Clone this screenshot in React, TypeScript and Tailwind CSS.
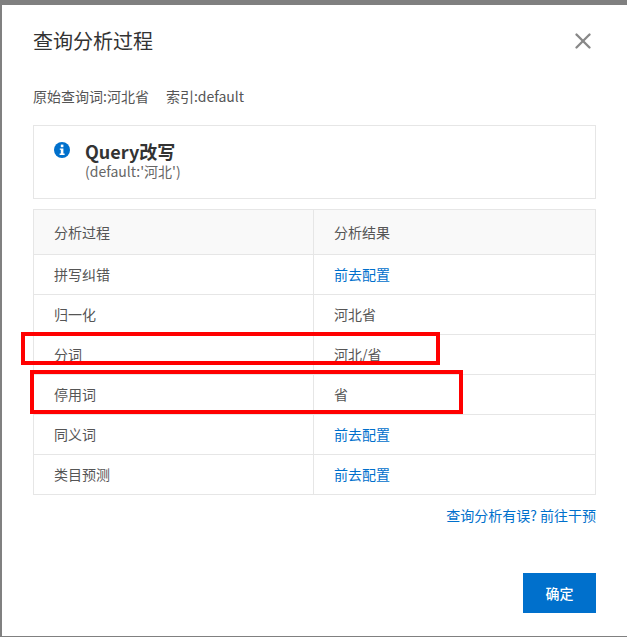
import { X } from 'lucide-react'

const rows = [
  { step: '拼写纠错', result: '前去配置', link: true },
  { step: '归一化', result: '河北省' },
  { step: '分词', result: '河北/省' },
  { step: '停用词', result: '省' },
  { step: '同义词', result: '前去配置', link: true },
  { step: '类目预测', result: '前去配置', link: true },
]

const font = 'font-["Noto_Sans_CJK_SC","Liberation_Sans",sans-serif]'

function InfoIcon() {
  return (
    <svg width="16" height="18" viewBox="0 0 16 18" className="mt-[1px] shrink-0">
      <circle cx="8" cy="9" r="8" fill="#0070cc" />
      <rect x="6.8" y="3.6" width="2.6" height="2.6" fill="#fff" />
      <path d="M5.8 7.4h3.6v5.2h1.2v1.4H5.6v-1.4h1.2V8.8h-1z" fill="#fff" />
    </svg>
  )
}

export default function App() {
  return (
    <div className={`h-[637px] w-[627px] overflow-hidden bg-[#808080] pt-[5px] pb-[1px] pl-[2px] ${font}`}>
      <div className="relative h-full bg-white px-[31px] text-[14px] text-[#333]">
        <div className="flex h-[74px] items-center justify-between pb-[2px]">
          <h2 className="text-[20px] font-normal text-[#333]">查询分析过程</h2>
          <X size={26} strokeWidth={2.2} className="text-[#888]" />
        </div>
        <div className="flex h-[34px] items-center gap-[17px] text-[#555]">
          <span>原始查询词:河北省</span>
          <span>索引:default</span>
        </div>
        <div className="mt-[12px] flex h-[74px] gap-[15px] border border-[#e6e6e6] px-[20px] pt-[14px]">
          <InfoIcon />
          <div>
            <div className="text-[18px] leading-[22px] font-bold text-[#333]">Query改写</div>
            <div className="text-[14px] leading-[18px] text-[#666]">(default:'河北')</div>
          </div>
        </div>
        <table className="mt-[10px] w-full table-fixed border-collapse">
          <thead>
            <tr className="h-[45px] bg-[#f9f9f9] text-left">
              <th className="w-[280px] border border-[#e6e6e6] pl-[20px] font-normal text-[#555]">分析过程</th>
              <th className="border border-[#e6e6e6] pl-[20px] font-normal text-[#555]">分析结果</th>
            </tr>
          </thead>
          <tbody>
            {rows.map(r => (
              <tr key={r.step} className="h-[40px]">
                <td className="border border-[#e6e6e6] pl-[20px] text-[#555]">{r.step}</td>
                <td className={`border border-[#e6e6e6] pl-[20px] ${r.link ? 'text-[#0070cc]' : 'text-[#555]'}`}>{r.result}</td>
              </tr>
            ))}
          </tbody>
        </table>
        <div className="mt-[10px] text-right text-[#0070cc]">查询分析有误? 前往干预</div>
        <div className="mt-[47px] flex justify-end">
          <button className="h-[40px] w-[73px] bg-[#0070cc] font-medium text-white">确定</button>
        </div>
        {/* Red annotation boxes drawn over the screenshot */}
        <div className="absolute top-[327px] left-[19px] h-[33px] w-[419px] border-[4px] border-[#f00]" />
        <div className="absolute top-[365px] left-[28px] h-[44px] w-[433px] border-[4px] border-[#f00]" />
      </div>
    </div>
  )
}
